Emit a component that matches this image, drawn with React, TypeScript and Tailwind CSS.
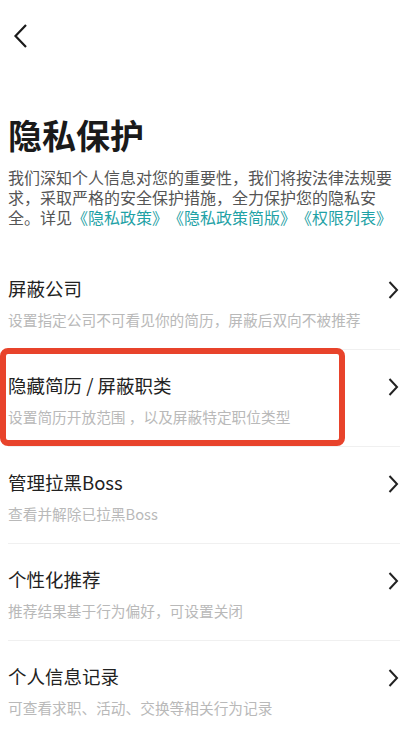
import { FC } from "react";

interface Item {
  title: string;
  desc: string;
  marked?: boolean;
}

const items: Item[] = [
  { title: "屏蔽公司", desc: "设置指定公司不可看见你的简历，屏蔽后双向不被推荐" },
  { title: "隐藏简历 / 屏蔽职类", desc: "设置简历开放范围 ，以及屏蔽特定职位类型", marked: true },
  { title: "管理拉黑Boss", desc: "查看并解除已拉黑Boss" },
  { title: "个性化推荐", desc: "推荐结果基于行为偏好，可设置关闭" },
  { title: "个人信息记录", desc: "可查看求职、活动、交换等相关行为记录" },
];

const font = { fontFamily: '"Noto Sans CJK SC", "Noto Sans", sans-serif' };

const Row: FC<{ item: Item }> = ({ item }) => (
  <div className="relative border-b border-[#f0f0f0] pt-[22px] pb-[19px]">
    {/* Red annotation frame */}
    {item.marked && (
      <div className="absolute left-[-8px] top-[-2px] w-[345px] h-[98px] border-[6px] border-[#e8432b] rounded-[8px]"></div>
    )}
    <div className="flex items-center justify-between">
      <span className="text-[18.5px] leading-[26px] text-[#222]">{item.title}</span>
      <svg width="12" height="20" viewBox="0 0 12 20" className="mr-[1px] mt-[4px]">
        <path d="M2.5 2 L10 10 L2.5 18" fill="none" stroke="#222" strokeWidth="2" />
      </svg>
    </div>
    <div className="mt-[9px] text-[14.7px] leading-[20px] text-[#b9b9b9]">{item.desc}</div>
  </div>
);

const App: FC = (): JSX.Element => {
  return (
    <div className="w-[419px] min-h-[735px] bg-white overflow-hidden [text-spacing-trim:space-all]" style={font}>
      {/* Back */}
      <div className="pt-[24px] pl-[13px]">
        <svg width="16" height="24" viewBox="0 0 16 24">
          <path d="M13 1 L2.5 12 L13 23" fill="none" stroke="#1a1a1a" strokeWidth="2.2" />
        </svg>
      </div>

      <div className="pl-[8px] pr-[19px]">
        <h1 className="mt-[65px] text-[34px] leading-[44px] font-bold text-[#1a1a1a]">隐私保护</h1>
        <p className="mt-[10px] text-[16px] leading-[20px] text-[#555]">
          我们深知个人信息对您的重要性，我们将按法律法规要求，采取严格的安全保护措施，全力保护您的隐私安全。详见
          <span className="text-[#1fa2a6]">《隐私政策》《隐私政策简版》《权限列表》</span>
        </p>

        <div className="mt-[26px]">
          {items.map((item) => (
            <Row key={item.title} item={item} />
          ))}
        </div>
      </div>
    </div>
  );
};

export default App;
